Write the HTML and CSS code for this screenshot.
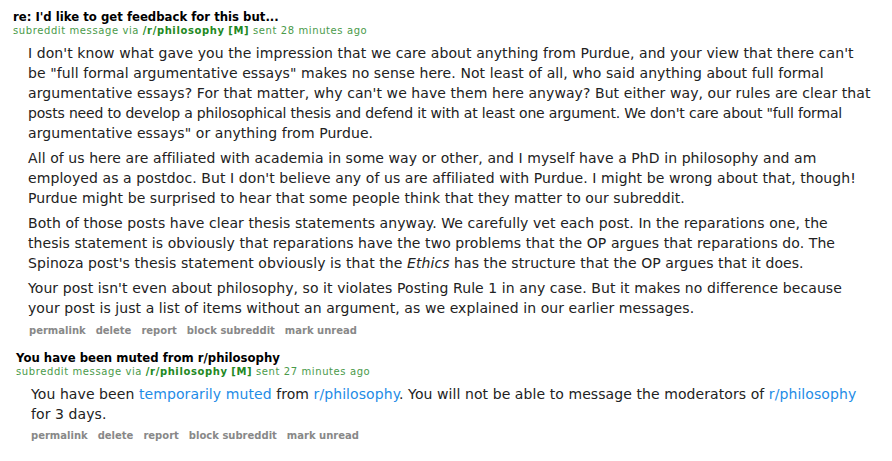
FILE: index.html
```html
<!DOCTYPE html>
<html>
<head>
<meta charset="utf-8">
<link rel="stylesheet" href="styles.css">
</head>
<body>
<div class="message">
  <div class="subject">re: I'd like to get feedback for this but...</div>
  <div class="tagline">subreddit message via <a class="sr">/r/philosophy</a> <span class="mod">[M]</span> sent 28 minutes ago</div>
  <div class="md">
    <p>I don't know what gave you the impression that we care about anything from Purdue, and your view that there can't be "full formal argumentative essays" makes no sense here. Not least of all, who said anything about full formal argumentative essays? For that matter, why can't we have them here anyway? But either way, our rules are clear that <span class="fit">posts need to develop a philosophical thesis and defend it with at least one argument. We don't care about "full formal</span> argumentative essays" or anything from Purdue.</p>
    <p>All of us here are affiliated with academia in some way or other, and I myself have a PhD in philosophy and am employed as a postdoc. But I don't believe any of us are affiliated with Purdue. I might be wrong about that, though! Purdue might be surprised to hear that some people think that they matter to our subreddit.</p>
    <p>Both of those posts have clear thesis statements anyway. We carefully vet each post. In the reparations one, the thesis statement is obviously that reparations have the two problems that the OP argues that reparations do. The Spinoza post's thesis statement obviously is that the <em>Ethics</em> has the structure that the OP argues that it does.</p>
    <p>Your post isn't even about philosophy, so it violates Posting Rule 1 in any case. But it makes no difference because your post is just a list of items without an argument, as we explained in our earlier messages.</p>
  </div>
  <ul class="buttons">
    <li>permalink</li><li>delete</li><li>report</li><li>block subreddit</li><li>mark unread</li>
  </ul>
</div>
<div class="message second">
  <div class="subject">You have been muted from r/philosophy</div>
  <div class="tagline">subreddit message via <a class="sr">/r/philosophy</a> <span class="mod">[M]</span> sent 27 minutes ago</div>
  <div class="md">
    <p>You have been <a>temporarily muted</a> from <a>r/philosophy</a>. You will not be able to message the moderators of <a>r/philosophy</a> for 3 days.</p>
  </div>
  <ul class="buttons">
    <li>permalink</li><li>delete</li><li>report</li><li>block subreddit</li><li>mark unread</li>
  </ul>
</div>
</body>
</html>
```
FILE: styles.css
```css
html, body {
  margin: 0;
  padding: 0;
  background: #fff;
}
body {
  font-family: Verdana, "DejaVu Sans", sans-serif;
  color: #222;
  padding-top: 10px;
}
.message {
  padding-left: 13px;
}
.message.second {
  padding-left: 16px;
  margin-top: 13px;
}
.subject {
  font-size: 11.7px;
  font-weight: bold;
  color: #000;
  line-height: 14px;
}
.tagline {
  font-size: 10px;
  letter-spacing: 0.6px;
  line-height: 14px;
  color: #4a9a4a;
}
.tagline .sr,
.tagline .mod {
  font-weight: bold;
  color: #228822;
}
.md {
  font-size: 14px;
  letter-spacing: 0.08px;
  line-height: 20px;
  color: #222;
  max-width: 844px;
  margin-left: 15px;
  margin-top: 5px;
}
.md p {
  margin: 0 0 5px 0;
}
.md p:last-child {
  margin-bottom: 0;
}
.md .fit {
  letter-spacing: -0.18px;
}
.md a {
  color: #1e8ce6;
}
.buttons {
  list-style: none;
  margin: 6px 0 0 16px;
  padding: 0;
  display: flex;
  gap: 10px;
  font-size: 10px;
  line-height: 14px;
  font-weight: bold;
  color: #888;
}
.second .buttons {
  margin-top: 5px;
  margin-left: 15px;
}
```
